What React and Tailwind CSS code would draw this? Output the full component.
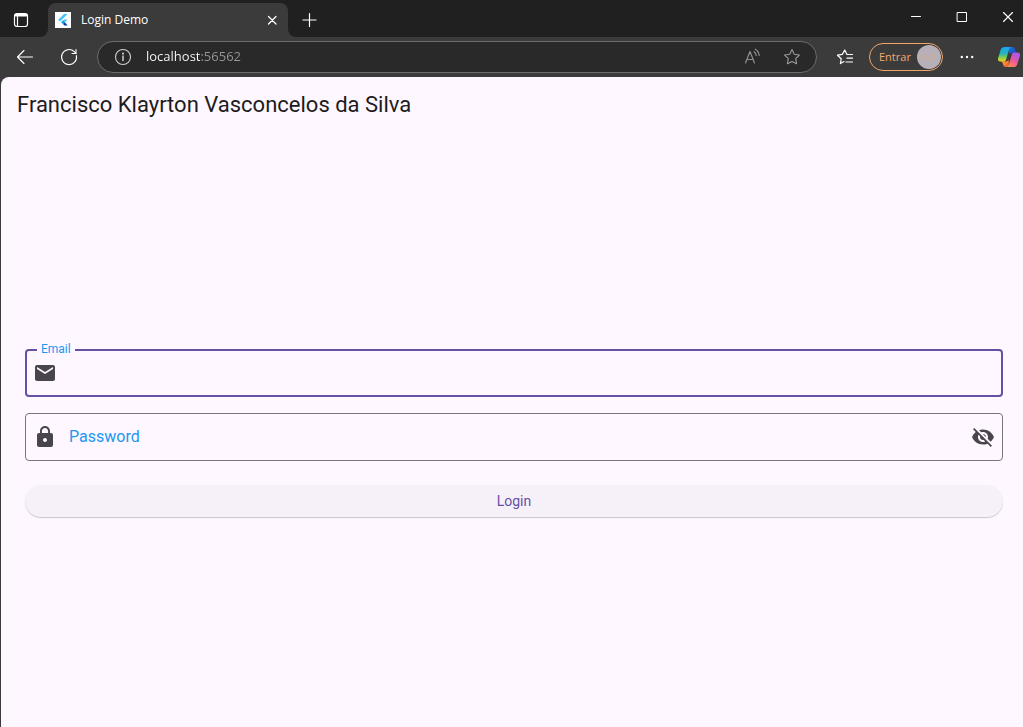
import React from "react";
import { MdEmail, MdLock, MdVisibilityOff } from "react-icons/md";

function Stroke({ size = 20, width = 1, className = "", children }) {
  return (
    <svg
      width={size}
      height={size}
      viewBox={`0 0 ${size} ${size}`}
      fill="none"
      stroke="currentColor"
      strokeWidth={width}
      strokeLinecap="round"
      strokeLinejoin="round"
      className={`shrink-0 ${className}`}
      aria-hidden="true"
    >
      {children}
    </svg>
  );
}

function FlutterLogo() {
  return (
    <svg width="16" height="16" viewBox="0 0 16 16" className="shrink-0" aria-hidden="true">
      <rect width="16" height="16" fill="#fff" />
      <path d="M9 2H12.600L5 9.600 3.200 7.800z" fill="#47c5fb" />
      <path d="M9 7.400H12.600L8 12 6.200 10.200z" fill="#47c5fb" />
      <path d="M6.200 10.200 8 8.400 9.800 10.200 8 12z" fill="#00a8f0" />
      <path d="M8 12 9.800 10.200 12.600 13.400H9.400z" fill="#00459c" />
    </svg>
  );
}

function CopilotLogo() {
  return (
    <svg width="24" height="24" viewBox="0 0 24 24" className="shrink-0" aria-hidden="true">
      <defs>
        <linearGradient id="cpLeft" x1="0" y1="0" x2="0" y2="1">
          <stop offset="0" stopColor="#1ba5f5" />
          <stop offset="0.45" stopColor="#25b2b8" />
          <stop offset="0.75" stopColor="#8fcf4a" />
          <stop offset="1" stopColor="#f4d01d" />
        </linearGradient>
        <linearGradient id="cpRight" x1="0.7" y1="0" x2="0.2" y2="1">
          <stop offset="0" stopColor="#a05af0" />
          <stop offset="0.5" stopColor="#e9569e" />
          <stop offset="1" stopColor="#ff8a4c" />
        </linearGradient>
        <linearGradient id="cpTop" x1="0" y1="0" x2="1" y2="1">
          <stop offset="0" stopColor="#1b76dc" />
          <stop offset="1" stopColor="#1d3fc0" />
        </linearGradient>
        <linearGradient id="cpBottom" x1="0" y1="0" x2="1" y2="1">
          <stop offset="0" stopColor="#ffb52e" />
          <stop offset="1" stopColor="#f0543c" />
        </linearGradient>
      </defs>
      <path d="M12 2h3.200c1.400 0 2.200.8 2.600 2l.8 2.600c.2.8.7 1.200 1.500 1.400h-5.300c-1.200 0-2 .7-2.400 1.800z" fill="url(#cpTop)" />
      <path d="M12 22H8.800c-1.400 0-2.200-.8-2.600-2l-.8-2.400c-.2-.8-.7-1.200-1.500-1.400h5.300c1.200 0 2-.7 2.400-1.800z" fill="url(#cpBottom)" />
      <path d="M7.400 2h6.800c-1 .2-1.600.9-1.900 1.900L9.200 14.200c-.4 1.400-1.300 2.200-2.700 2.200H3.200C1.300 16.400.6 14.900 1.100 13L3.800 4.600C4.400 2.900 5.600 2 7.400 2z" fill="url(#cpLeft)" />
      <path d="M16.600 22H9.800c1-.2 1.600-.9 1.900-1.900l3.100-10.300c.4-1.400 1.300-2.200 2.700-2.200h3.300c1.900 0 2.600 1.500 2.100 3.400l-2.700 8.400c-.6 1.700-1.800 2.600-3.600 2.600z" fill="url(#cpRight)" />
    </svg>
  );
}

function TitleBar() {
  return (
    <div className="flex h-[37px] bg-[#3b3b3b] text-white">
      <div className="flex w-12 items-center rounded-br-lg bg-[#202020] pt-0.5 pl-3">
        <button type="button" aria-label="Tab actions">
          <Stroke size={18} width={1.2}>
            <rect x="2.500" y="2.500" width="13" height="13" rx="2.500" />
            <path d="M3.500 4.200h11" strokeWidth="2.400" />
            <path d="M5.500 5v10.500" />
          </Stroke>
        </button>
      </div>
      <div className="w-60 bg-[#202020] pt-[3px]">
        <div className="flex h-full items-center rounded-t-lg bg-[#3b3b3b] pr-2 pl-[7px]">
          <FlutterLogo />
          <span className="ml-2.5 flex-1 text-xs">Login Demo</span>
          <button type="button" aria-label="Close tab">
            <Stroke size={16} width={1.3}>
              <path d="M4.500 4.500l7.500 7.500M12 4.500l-7.500 7.500" />
            </Stroke>
          </button>
        </div>
      </div>
      <div className="flex flex-1 items-center justify-between rounded-bl-lg bg-[#202020] pl-3">
        <button type="button" aria-label="New tab" className="pt-0.5">
          <Stroke size={20} width={1.2}>
            <path d="M9.500 3.500v13M3 10h13" />
          </Stroke>
        </button>
        <div className="flex items-center gap-[30px] pr-[7px] pb-1">
          <button type="button" aria-label="Minimize">
            <Stroke size={16}>
              <path d="M3.500 7.500h9" />
            </Stroke>
          </button>
          <button type="button" aria-label="Maximize">
            <Stroke size={16}>
              <rect x="3.500" y="3.500" width="9" height="9" />
            </Stroke>
          </button>
          <button type="button" aria-label="Close window">
            <Stroke size={16} width={1.1}>
              <path d="M3.500 3.500l9 9M12.500 3.500l-9 9" />
            </Stroke>
          </button>
        </div>
      </div>
    </div>
  );
}

function Toolbar() {
  return (
    <div className="flex h-10 items-center bg-[#3b3b3b] pl-[15px] text-white">
      <button type="button" aria-label="Back">
        <Stroke size={20} width={1.1}>
          <path d="M17.500 10H2.500M9 3.500L2.500 10L9 16.500" />
        </Stroke>
      </button>
      <button type="button" aria-label="Refresh" className="ml-6">
        <Stroke size={20} width={1.1}>
          <path d="M17.400 8.500A7.500 7.500 0 1 1 15.300 4.700L17 6.300" />
          <path d="M17 2.500V6.500H13" />
        </Stroke>
      </button>
      <div className="ml-[18px] flex h-8 flex-1 items-center rounded-full border border-[#6c6c6c] bg-[#292929] pr-3.5 pl-[15px]">
        <button type="button" aria-label="Site information" className="text-[#d0d0d0]">
          <Stroke size={20} width={1.1}>
            <circle cx="10" cy="10" r="7.500" />
            <path d="M10 9v4.500" strokeWidth="1.500" />
            <circle cx="10" cy="6.600" r="0.500" fill="currentColor" />
          </Stroke>
        </button>
        <input
          type="text"
          aria-label="Address"
          defaultValue="localhost:56562"
          className="ml-[13px] min-w-0 flex-1 bg-linear-to-r from-white from-[54px] to-[#969696] to-[54px] bg-clip-text text-[13px] text-transparent outline-none"
        />
        <button type="button" aria-label="Read aloud" className="text-[#8f8f8f]">
          <Stroke size={20} width={1.2}>
            <path d="M3.500 16L8 4.500L12.500 16M5 12.500h6" />
            <path d="M12 4.800C13.400 5.800 14.100 7 14.200 8.500M13.300 2.200C15.700 3.600 17 5.800 17.200 8.500" />
          </Stroke>
        </button>
        <button type="button" aria-label="Add to favorites" className="ml-5 text-[#9a9a9a]">
          <Stroke size={20} width={1.1}>
            <path d="M10 2.600L12.300 7.300L17.400 8L13.700 11.700L14.600 16.800L10 14.400L5.400 16.800L6.300 11.700L2.600 8L7.700 7.300Z" />
          </Stroke>
        </button>
      </div>
      <button type="button" aria-label="Favorites" className="ml-[18px]">
        <Stroke size={20} width={1.2}>
          <path d="M9 14.600L5.400 16.600L6.200 11.800L2.500 8.200L7.300 7.400L9.800 3L12 7.500H17.500M12 11.200H17.500M11 15H17.500" />
        </Stroke>
      </button>
      <button
        type="button"
        className="ml-3.5 flex h-7 w-[74px] items-center justify-between rounded-full border border-[#f0a468] pr-px pl-[9px] text-[11px] text-[#f5a86c]"
      >
        Entrar
        <svg width="24" height="24" viewBox="0 0 24 24" aria-hidden="true">
          <circle cx="12" cy="12" r="12" fill="#b7b0b9" />
          <path
            d="M1.500 11c2-1 3 0 2 2s-2 1-1.500 0M6 13c0-3 4-4 4-1s-4 4-4 1M11 13c0-3 4-4 4-1s-4 4-4 1M18 9l-2 6c2 0 3-1 5-2"
            fill="none"
            stroke="#cfac97"
            strokeWidth="1"
          />
        </svg>
      </button>
      <button type="button" aria-label="Settings and more" className="ml-3.5">
        <svg width="20" height="20" viewBox="0 0 20 20" fill="currentColor" aria-hidden="true">
          <circle cx="4.800" cy="10" r="1.200" />
          <circle cx="10" cy="10" r="1.200" />
          <circle cx="15.200" cy="10" r="1.200" />
        </svg>
      </button>
      <button type="button" aria-label="Copilot" className="ml-5 pr-0.5">
        <CopilotLogo />
      </button>
    </div>
  );
}

function LoginPage() {
  return (
    <main className="ml-px flex flex-1 flex-col rounded-tl-lg bg-[#fef7ff] font-['Roboto',sans-serif]">
      <header className="flex h-14 items-center px-4">
        <h1 className="text-[22px] leading-7 text-[#1d1b20]">Francisco Klayrton Vasconcelos da Silva</h1>
      </header>
      <form
        className="flex flex-1 flex-col justify-center pt-1.5 pr-5 pl-6"
        onSubmit={(e) => e.preventDefault()}
      >
        <div className="relative flex h-12 items-center gap-3 rounded border-2 border-[#6750a4] px-1.5 text-[#49454f]">
          <label
            htmlFor="email"
            className="absolute -top-2.5 left-2.5 bg-[#fef7ff] px-1 text-xs text-[#2196f3]"
          >
            Email
          </label>
          <MdEmail size={24} className="shrink-0" />
          <input id="email" type="email" className="min-w-0 flex-1 bg-transparent text-base text-[#1d1b20] outline-none" />
        </div>
        <div className="mt-4 flex h-12 items-center gap-3 rounded border border-[#79747e] px-[7px] text-[#49454f]">
          <MdLock size={24} className="shrink-0" />
          <label htmlFor="password" className="text-base text-[#2196f3]">
            Password
          </label>
          <input id="password" type="password" className="min-w-0 flex-1 bg-transparent text-base text-[#1d1b20] outline-none" />
          <button type="button" aria-label="Show password">
            <MdVisibilityOff size={24} />
          </button>
        </div>
        <button
          type="submit"
          className="mt-6 h-8 rounded-full bg-[#f6f1f9] text-sm text-[#6750a4] shadow-[0_1px_1px_rgba(0,0,0,0.2)]"
        >
          Login
        </button>
      </form>
    </main>
  );
}

export default function App() {
  return (
    <div className="flex min-h-screen flex-col bg-[#3b3b3b] font-['Open_Sans',sans-serif]">
      <TitleBar />
      <Toolbar />
      <LoginPage />
    </div>
  );
}
